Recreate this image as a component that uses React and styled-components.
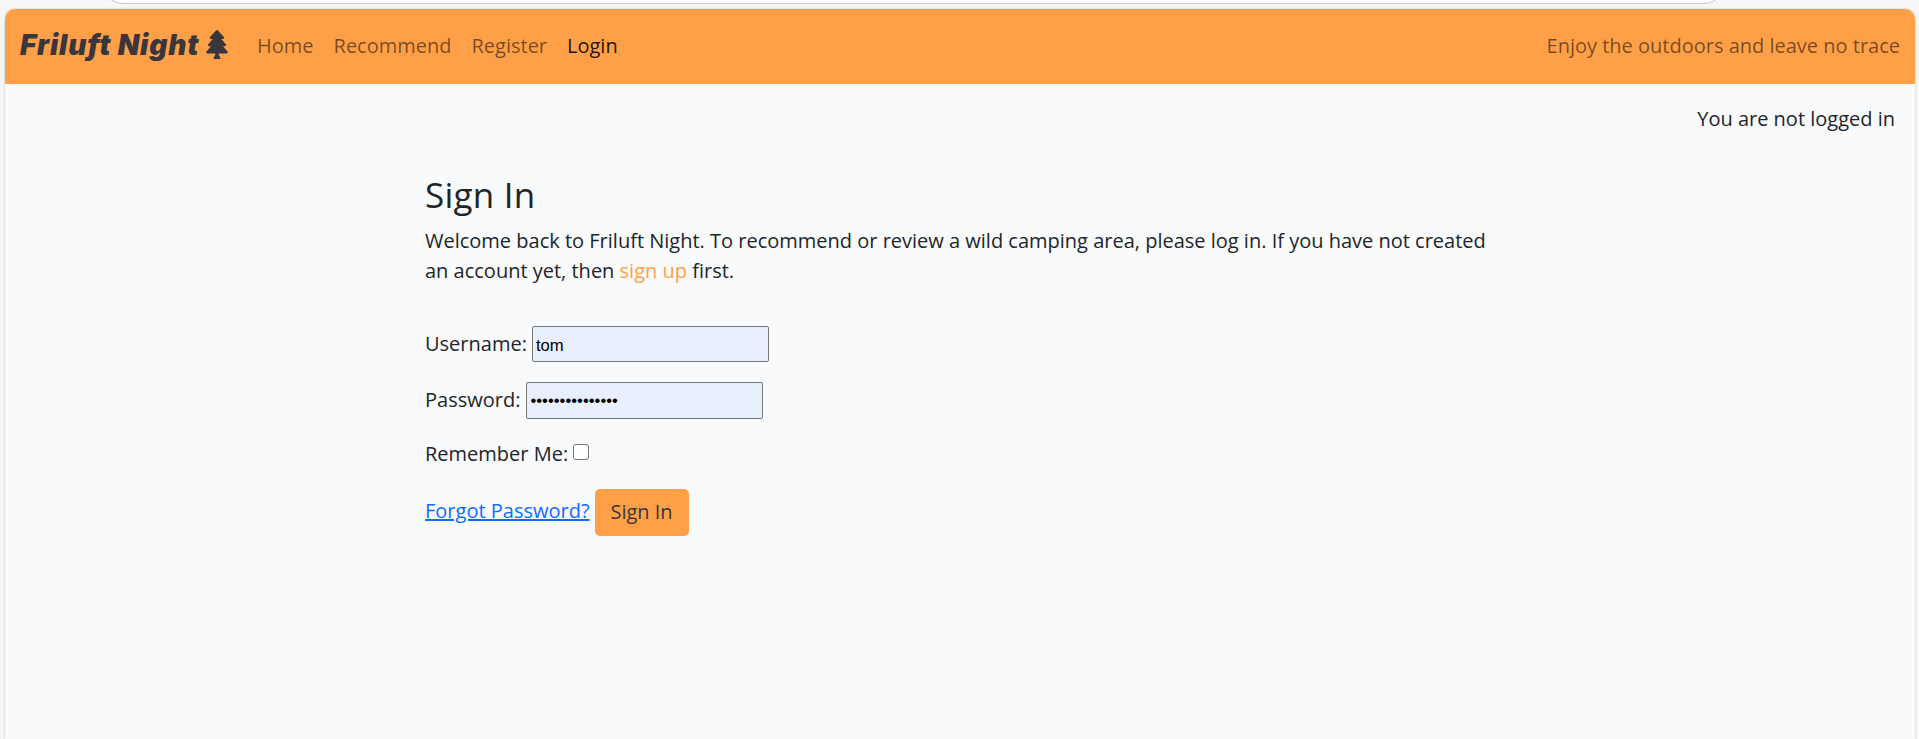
import React from "react";
import styled, { createGlobalStyle } from "styled-components";
import { FaTree } from "react-icons/fa";

const GlobalStyle = createGlobalStyle`
  *, *::before, *::after { box-sizing: border-box; }
  body {
    margin: 0;
    background: #f7f7f7;
    color: #212529;
    font-family: "Open Sans", sans-serif;
    font-size: 20px;
    line-height: 30px;
    overflow: hidden;
  }
`;

const Frame = styled.div`
  height: 739px;
  display: flex;
  flex-direction: column;
  padding: 0 4px 0 5px;
`;

const AddressStrip = styled.div`
  flex: none;
  height: 4px;
  margin: 0 190px 5px 97px;
  overflow: hidden;
  display: flex;
  align-items: flex-end;
`;

const AddressBar = styled.div`
  flex: 1;
  height: 42px;
  background: #fff;
  border: 1px solid #c9c9c9;
  border-radius: 21px;
`;

const Page = styled.div`
  flex: 1;
  background: #f9fafc;
  border-radius: 10px 10px 0 0;
  overflow: hidden;
  box-shadow: 0 0 2px rgba(0, 0, 0, 0.3);
`;

const Navbar = styled.nav`
  height: 75px;
  background: #ffa048;
  display: flex;
  align-items: flex-start;
  padding: 22px 15px 0;
`;

const Brand = styled.a`
  display: flex;
  align-items: center;
  width: 226px;
  height: 28px;
  color: #3a363b;
  font-family: Inter, Lato, sans-serif;
  font-size: 28px;
  font-weight: 900;
  font-style: italic;
  letter-spacing: 0.85px;
  white-space: nowrap;

  svg {
    flex: none;
    width: 22px;
    height: 29px;
    margin: 0 0 2px 6px;
  }
`;

const BrandName = styled.span`
  width: 180px;
`;

const NavLinks = styled.div`
  display: flex;
  gap: 20px;
  margin-left: 11px;
`;

const NavLink = styled.a`
  color: ${(p) => (p.$active ? "rgba(0,0,0,0.9)" : "rgba(0,0,0,0.55)")};
`;

const Tagline = styled.span`
  margin-left: auto;
  color: rgba(0, 0, 0, 0.55);
`;

const Status = styled.p`
  margin: 0;
  padding: 20px 20px 0;
  text-align: right;
`;

const Content = styled.main`
  width: 1070px;
  margin: 40px 0 0 420px;
`;

const Title = styled.h3`
  margin: 0 0 10px;
  font-size: 35px;
  line-height: 42px;
  font-weight: 500;
  letter-spacing: 0.25px;
`;

const Intro = styled.p`
  margin: 0 0 40px;
`;

const SignUp = styled.a`
  color: #ffa048;
`;

const Row = styled.div`
  display: flex;
  align-items: center;
  height: ${(p) => p.$height}px;
  margin-bottom: ${(p) => p.$after || 0}px;
  gap: ${(p) => p.$gap}px;
`;

const Label = styled.label`
  margin-bottom: ${(p) => p.$lift || 0}px;
`;

const Field = styled.input`
  width: 237px;
  height: 100%;
  padding: 4px 3px 1px;
  border: 1px solid #767676;
  border-radius: 2px;
  background: #e8f0fe;
  color: #000;
  font-family: "Liberation Sans", Arial, sans-serif;
  font-size: 16.67px;
`;

const PasswordField = styled(Field)`
  padding-top: 1px;
`;

const Checkbox = styled.input`
  appearance: none;
  width: 16px;
  height: 16px;
  margin: 0 0 5px;
  border: 1px solid #767676;
  border-radius: 3px;
  background: #fff;
`;

const ForgotLink = styled.a`
  color: #0d6efd;
  text-decoration: underline;
  margin-bottom: 4px;
`;

const SubmitButton = styled.button`
  width: 94px;
  height: 47px;
  padding: 0 0 2px;
  border: 0;
  border-radius: 5px;
  background: #ffa048;
  color: #3a363b;
  font: inherit;
`;

const links = ["Home", "Recommend", "Register", "Login"];

export default function App() {
  return (
    <>
      <GlobalStyle />
      <Frame>
        <AddressStrip>
          <AddressBar />
        </AddressStrip>
        <Page>
          <Navbar>
            <Brand>
              <BrandName>Friluft Night</BrandName>
              <FaTree />
            </Brand>
            <NavLinks>
              {links.map((name) => (
                <NavLink key={name} $active={name === "Login"}>
                  {name}
                </NavLink>
              ))}
            </NavLinks>
            <Tagline>Enjoy the outdoors and leave no trace</Tagline>
          </Navbar>
          <Status>You are not logged in</Status>
          <Content>
            <Title>Sign In</Title>
            <Intro>
              Welcome back to Friluft Night. To recommend or review a wild
              camping area, please log in. If you have not created an account
              yet, then <SignUp>sign up</SignUp> first.
            </Intro>
            <Row $height={36} $after={20} $gap={5}>
              <Label htmlFor="username">Username:</Label>
              <Field id="username" type="text" defaultValue="tom" />
            </Row>
            <Row $height={37} $after={20} $gap={6}>
              <Label htmlFor="password" $lift={2}>
                Password:
              </Label>
              <PasswordField
                id="password"
                type="password"
                defaultValue="campfirenights1"
              />
            </Row>
            <Row $height={30} $after={20} $gap={5}>
              <Label htmlFor="remember">Remember Me:</Label>
              <Checkbox id="remember" type="checkbox" />
            </Row>
            <Row $height={47} $gap={5}>
              <ForgotLink>Forgot Password?</ForgotLink>
              <SubmitButton type="button">Sign In</SubmitButton>
            </Row>
          </Content>
        </Page>
      </Frame>
    </>
  );
}
